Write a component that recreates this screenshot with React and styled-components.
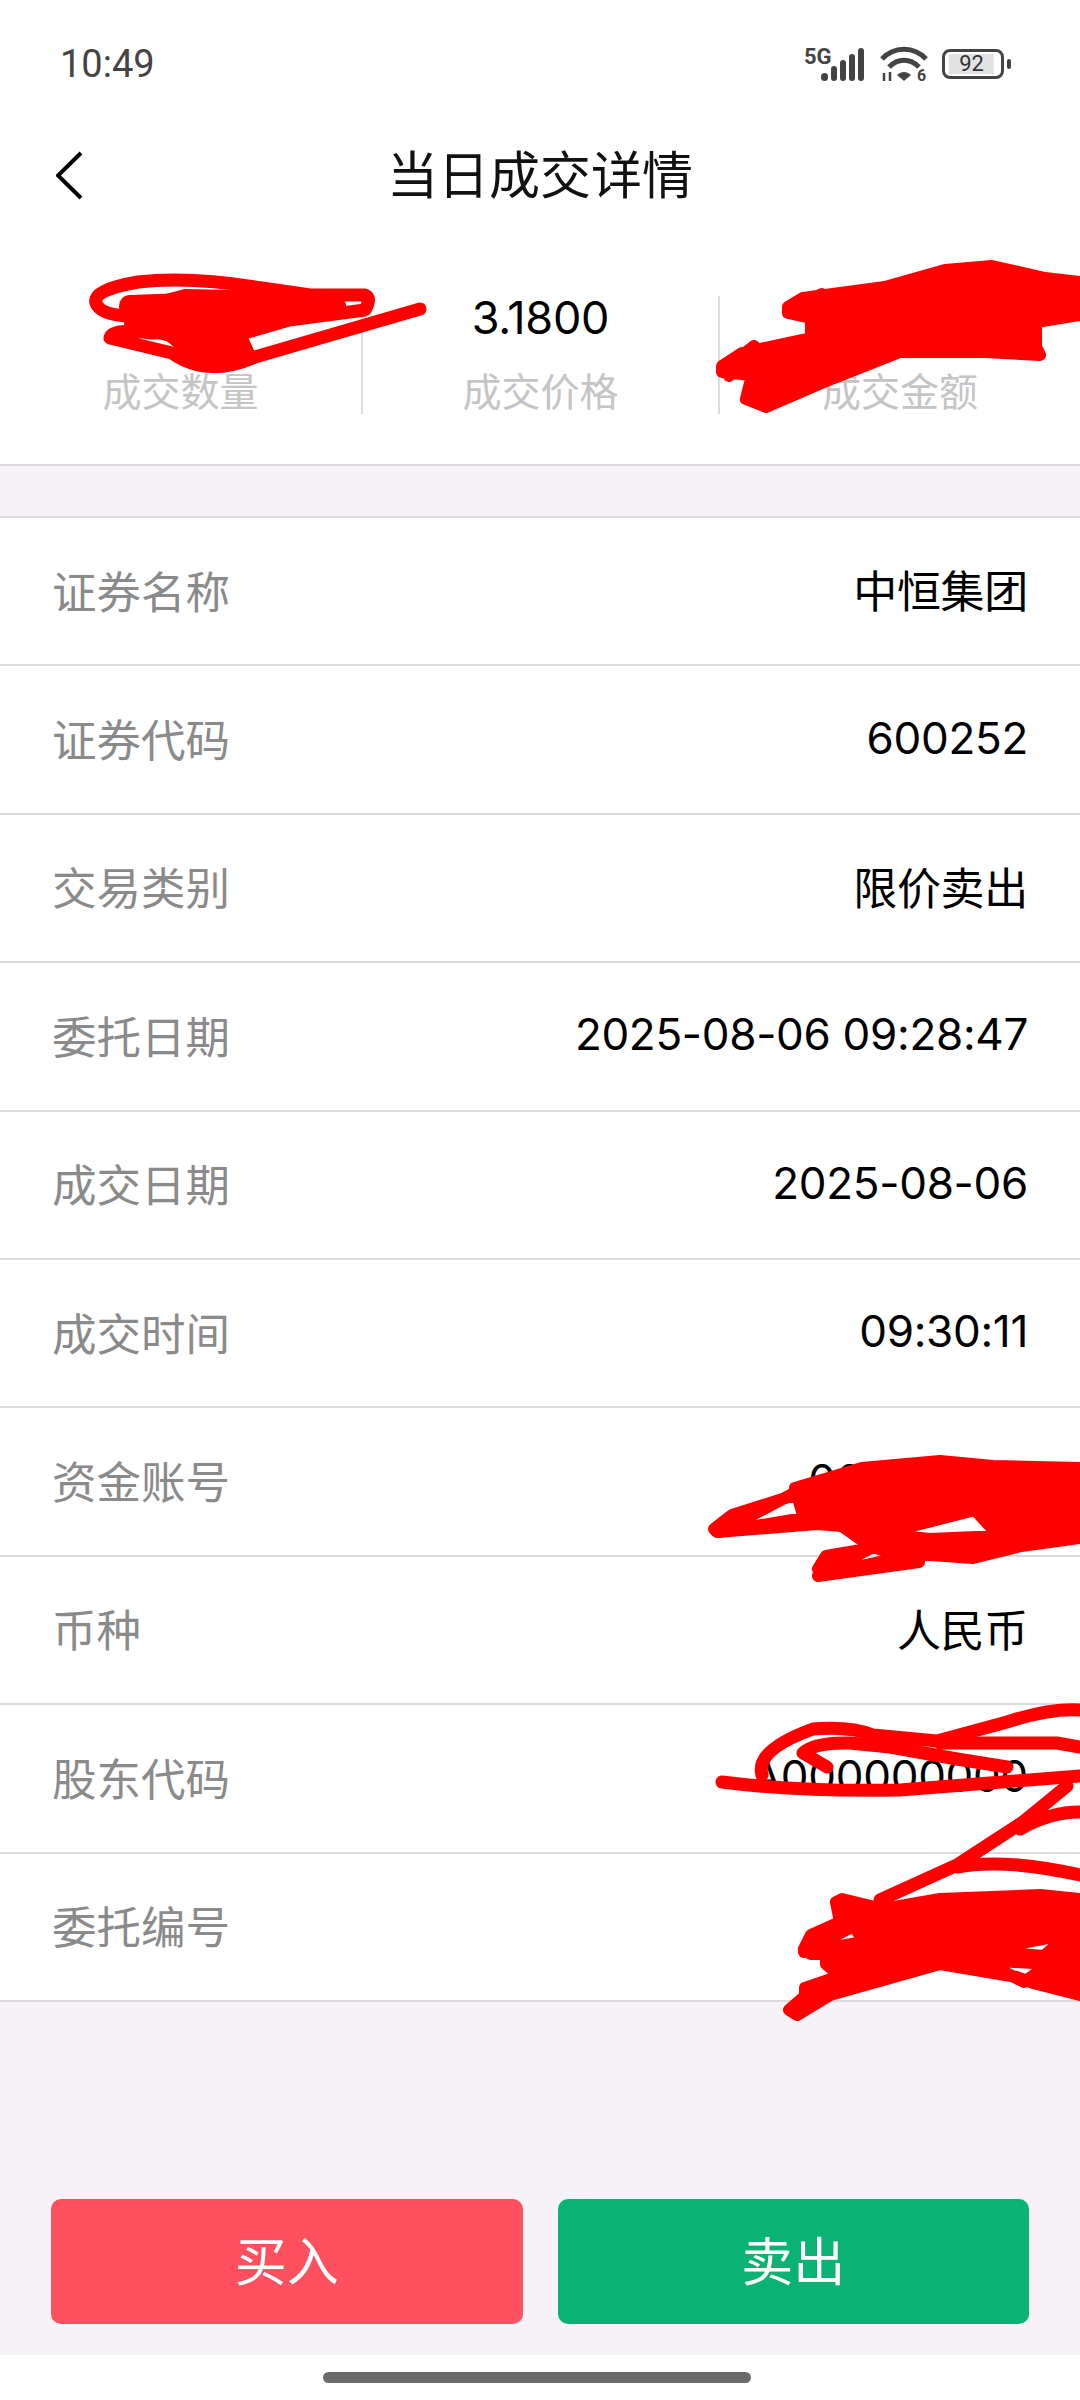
import React from 'react'
import styled, { createGlobalStyle } from 'styled-components'

const GlobalStyle = createGlobalStyle`
  html, body {
    margin: 0;
    padding: 0;
    background: #fff;
  }
  body {
    font-family: "Inter", "Noto Sans CJK SC", sans-serif;
  }
`

const summary = [
  { label: '成交数量', value: '000' },
  { label: '成交价格', value: '3.1800' },
  { label: '成交金额', value: '0000.00' },
]

const rows = [
  { label: '证券名称', value: '中恒集团' },
  { label: '证券代码', value: '600252' },
  { label: '交易类别', value: '限价卖出' },
  { label: '委托日期', value: '2025-08-06 09:28:47' },
  { label: '成交日期', value: '2025-08-06' },
  { label: '成交时间', value: '09:30:11' },
  { label: '资金账号', value: '00000000' },
  { label: '币种', value: '人民币' },
  { label: '股东代码', value: 'A000000000' },
  { label: '委托编号', value: 'A000000' },
]

const App = () => {
  return (
    <Page>
      <GlobalStyle />
      <Top>
        <StatusBar>
          <Clock>10:49</Clock>
          <StatusIcons>
            <svg width="64" height="38" viewBox="0 0 64 38">
              <text x="0" y="19" fontFamily="Roboto, sans-serif" fontSize="22" fontWeight="700" fill="#444">5G</text>
              <rect x="17" y="28" width="7" height="8" rx="3.5" fill="#444" />
              <rect x="27" y="21" width="6" height="15" rx="3" fill="#444" />
              <rect x="36" y="15" width="6" height="21" rx="3" fill="#444" />
              <rect x="45" y="9" width="6" height="27" rx="3" fill="#444" />
              <rect x="54" y="3" width="6" height="33" rx="3" fill="#444" />
            </svg>
            <svg width="50" height="38" viewBox="0 0 50 38">
              <path d="M2 14 C14 1 34 1 46 14" fill="none" stroke="#444" strokeWidth="5" />
              <path d="M9 22 C18 13 30 13 39 22" fill="none" stroke="#444" strokeWidth="5" />
              <path d="M17 30 L24 36 L31 30 C27 26 21 26 17 30 Z" fill="#444" />
              <path d="M4 28 V36 M10 27 V36" stroke="#444" strokeWidth="2.5" />
              <text x="37" y="36" fontFamily="Roboto, sans-serif" fontSize="16" fontWeight="700" fill="#444">6</text>
            </svg>
            <Battery>
              <BatteryLevel>92</BatteryLevel>
              <BatteryNub />
            </Battery>
          </StatusIcons>
        </StatusBar>
        <NavBar>
          <BackIcon width="30" height="50" viewBox="0 0 30 50">
            <path d="M25 2 L2 24.5 L25 47" fill="none" stroke="#000" strokeWidth="4" />
          </BackIcon>
          <Title>当日成交详情</Title>
        </NavBar>
        <Summary>
          {summary.map(item => (
            <SummaryCell key={item.label}>
              <SummaryValue>{item.value}</SummaryValue>
              <SummaryLabel>{item.label}</SummaryLabel>
            </SummaryCell>
          ))}
        </Summary>
      </Top>

      <DetailList>
        {rows.map(row => (
          <DetailRow key={row.label}>
            <RowLabel>{row.label}</RowLabel>
            <RowValue>{row.value}</RowValue>
          </DetailRow>
        ))}
      </DetailList>

      <Actions>
        <ActionButton $color="#ff5060">买入</ActionButton>
        <ActionButton $color="#0ab374">卖出</ActionButton>
      </Actions>

      <HomeArea>
        <HomeBar />
      </HomeArea>

      {/* red pen marks drawn over the screenshot */}
      <Scribbles width="1080" height="2400" viewBox="0 0 1080 2400">
        <g fill="none" stroke="#fe0000" strokeWidth="13" strokeLinecap="round" strokeLinejoin="round">
          <path d="M420 309 L255 357 Q207 378 172 353 L110 338 Q112 328 152 333 L248 332 L289 320 L365 310 Q372 298 365 295 L310 295 L262 288 Q190 276 138 282 Q92 290 96 303 Q100 315 130 316" />
          <path d="M130 306 L300 300 M135 322 L260 312" strokeWidth="22" />
          <path d="M722 1782 Q800 1792 900 1790 L1080 1776" strokeWidth="13" />
          <path d="M762 1775 Q755 1750 813 1729 Q850 1726 873 1735 L937 1741 L1007 1722 Q1050 1708 1080 1710" />
          <path d="M827 1767 L803 1753 Q815 1742 850 1743 L890 1747 L957 1759 L1007 1767 M940 1743 L1057 1743 L1080 1747" />
          <path d="M1067 1786 L1023 1822 L957 1865 L880 1900 M1020 1829 Q1050 1812 1080 1812 M957 1867 Q1003 1858 1080 1875" />
        </g>
        <g fill="#fe0000" fillRule="evenodd" stroke="#fe0000" strokeWidth="12" strokeLinejoin="round">
          <path d="M185 295 L285 297 L340 305 L280 318 L240 334 L250 356 L195 356 L170 336 L135 326 L130 310 Z" />
          <path d="M788 307 L803 298 L885 287 L945 270 L992 266 L1045 278 L1080 282 L1080 315 L1036 322 L1036 347 L1040 355 L985 352 L900 352 L824 382 L766 407 L746 399 L752 375 L722 372 L722 366 L742 353 L811 338 L811 318 L788 313 Z M793 307 L822 294 L793 313 Z M726 368 L754 346 L729 376 Z M796 392 L846 358 L811 386 Z" />
          <path d="M795 1488 L862 1468 L940 1461 L993 1466 L1080 1468 L1080 1538 L1021 1546 L973 1558 L917 1554 L823 1574 L818 1569 L826 1556 L873 1548 L842 1526 L817 1524 L717 1532 L714 1529 L732 1515 L795 1495 Z M720 1532 L796 1492 L804 1518 Z M818 1576 L873 1547 L919 1562 Z M881 1534 L975 1510 L999 1536 L930 1539 Z" />
          <path d="M836 1902 L842 1899 L883 1909 L940 1899 L1040 1895 L1080 1899 L1080 1995 L1033 1983 L1017 1977 L940 1964 L830 1995 L797 2015 L789 2010 L805 1996 L805 1988 L840 1976 L826 1964 L826 1954 L811 1954 L804 1949 L811 1935 L840 1922 Z M804 1952 L854 1926 L864 1942 Z M981 1951 L1069 1934 L1044 1956 Z M981 1960 L1049 1964 L1024 1982 Z" />
        </g>
      </Scribbles>
    </Page>
  )
}

const Page = styled.div`
  position: relative;
  width: 1080px;
  height: 2400px;
  display: flex;
  flex-direction: column;
  background: #f6f2f7;
  overflow: hidden;
`

const Top = styled.div`
  height: 466px;
  box-sizing: border-box;
  background: #fff;
  border-bottom: 2px solid #dcdadd;
  flex-shrink: 0;
`

const StatusBar = styled.div`
  height: 126px;
  box-sizing: border-box;
  padding: 2px 76px 0 60px;
  display: flex;
  align-items: center;
  justify-content: space-between;
`

const Clock = styled.span`
  font-family: "Roboto", sans-serif;
  font-size: 38px;
  color: #444;
`

const StatusIcons = styled.div`
  display: flex;
  align-items: center;
  gap: 12px;
`

const Battery = styled.div`
  position: relative;
  width: 62px;
  height: 30px;
  box-sizing: border-box;
  border: 3px solid #444;
  border-radius: 8px;
  padding: 2px 7px 2px 4px;
  display: flex;
`

const BatteryLevel = styled.span`
  flex: 1;
  background: #e2e2e2;
  font-family: "Roboto", sans-serif;
  font-size: 22px;
  line-height: 20px;
  text-align: center;
  color: #333;
`

const BatteryNub = styled.span`
  position: absolute;
  right: -10px;
  top: 7px;
  width: 4px;
  height: 10px;
  border-radius: 2px;
  background: #444;
`

const NavBar = styled.div`
  height: 100px;
  padding: 0 56px;
  display: grid;
  grid-template-columns: 1fr auto 1fr;
  align-items: center;
`

const BackIcon = styled.svg`
  display: block;
`

const Title = styled.h1`
  margin: 0 0 9px;
  font-family: "Noto Sans CJK SC", sans-serif;
  font-size: 51px;
  font-weight: 400;
  color: #111;
`

const Summary = styled.div`
  margin-top: 70px;
  display: grid;
  grid-template-columns: 363px 357px 360px;
`

const SummaryCell = styled.div`
  height: 118px;
  display: flex;
  flex-direction: column;
  align-items: center;
  justify-content: space-between;
  box-sizing: border-box;
  border-right: 2px solid #dcdcdc;

  &:last-child {
    border-right: none;
  }
`

const SummaryValue = styled.div`
  font-size: 45px;
  line-height: 44px;
  letter-spacing: -0.2px;
  color: #000;
`

const SummaryLabel = styled.div`
  font-family: "Noto Sans CJK SC", sans-serif;
  font-size: 39px;
  line-height: 44px;
  padding-bottom: 3px;
  color: #c4c4c4;
`

const DetailList = styled.div`
  margin-top: 50px;
  background: #fff;
  border-top: 2px solid #dcdadd;
`

const DetailRow = styled.div`
  height: 148.4px;
  box-sizing: border-box;
  padding: 0 52px 4px 52px;
  display: flex;
  align-items: center;
  justify-content: space-between;
  border-bottom: 2px solid #dcdadd;
`

const RowLabel = styled.span`
  font-family: "Noto Sans CJK SC", sans-serif;
  font-size: 44.5px;
  color: #8a8a8a;
`

const RowValue = styled.span`
  font-size: 44px;
  letter-spacing: -0.3px;
  color: #000;
`

const Actions = styled.div`
  margin-top: auto;
  padding: 0 51px 31px;
  display: grid;
  grid-template-columns: 1fr 1fr;
  gap: 35px;
`

const ActionButton = styled.div`
  height: 125px;
  box-sizing: border-box;
  padding-bottom: 6px;
  border-radius: 10px;
  display: flex;
  align-items: center;
  justify-content: center;
  background: ${props => props.$color};
  font-family: "Noto Sans CJK SC", sans-serif;
  font-size: 52px;
  color: #fff;
`

const HomeArea = styled.div`
  height: 45px;
  background: #fff;
  display: flex;
  justify-content: center;
  padding: 17px 6px 0 0;
  box-sizing: border-box;
`

const HomeBar = styled.div`
  width: 428px;
  height: 11px;
  border-radius: 6px;
  background: #6b6a6b;
`

const Scribbles = styled.svg`
  position: absolute;
  left: 0;
  top: 0;
  pointer-events: none;
`

export default App
